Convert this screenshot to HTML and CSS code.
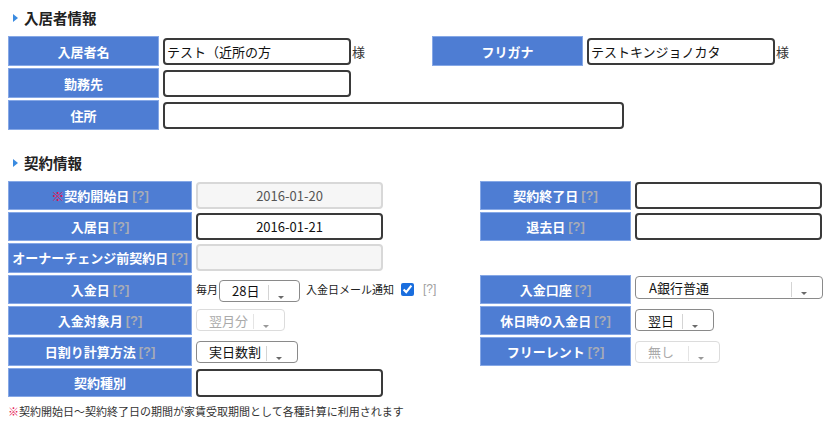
FILE: index.html
```html
<!DOCTYPE html>
<html lang="ja">
<head>
<meta charset="utf-8">
<title>入居者情報</title>
<link rel="stylesheet" href="styles.css">
</head>
<body>
<div class="page">
  <h2 class="heading"><span class="tri"></span>入居者情報</h2>
  <div class="grid grid1">
    <div class="lbl">入居者名</div>
    <div class="val"><input class="inp w188" type="text" value="テスト（近所の方"><span class="sama">様</span></div>
    <div class="lbl">フリガナ</div>
    <div class="val"><input class="inp w188" type="text" value="テストキンジョノカタ"><span class="sama">様</span></div>

    <div class="lbl">勤務先</div>
    <div class="val"><input class="inp w188" type="text" value=""></div>
    <div class="blank span2"></div>

    <div class="lbl">住所</div>
    <div class="val span3"><input class="inp w461" type="text" value=""></div>
  </div>

  <h2 class="heading heading2"><span class="tri"></span>契約情報</h2>
  <div class="grid grid2">
    <div class="lbl"><span class="req">※</span>契約開始日 <span class="q">[?]</span></div>
    <div class="val"><input class="inp w187 dis center" type="text" value="2016-01-20" readonly></div>
    <div class="lbl">契約終了日 <span class="q">[?]</span></div>
    <div class="val"><input class="inp w187" type="text" value=""></div>

    <div class="lbl">入居日 <span class="q">[?]</span></div>
    <div class="val"><input class="inp w187 center" type="text" value="2016-01-21"></div>
    <div class="lbl">退去日 <span class="q">[?]</span></div>
    <div class="val"><input class="inp w187" type="text" value=""></div>

    <div class="lbl">オーナーチェンジ前契約日 <span class="q">[?]</span></div>
    <div class="val"><input class="inp w187 dis" type="text" value="" readonly></div>
    <div class="blank span2"></div>

    <div class="lbl">入金日 <span class="q">[?]</span></div>
    <div class="val small">
      <span class="maitsuki">毎月</span>
      <div class="sel s81 lowsel"><span class="sel-text">28日</span><span class="sel-btn"><span class="arrow"></span></span></div>
      <span class="mail">入金日メール通知</span>
      <input class="chk" type="checkbox" checked>
      <span class="qv">[?]</span>
    </div>
    <div class="lbl">入金口座 <span class="q">[?]</span></div>
    <div class="val"><div class="sel s188 topsel"><span class="sel-text">A銀行普通</span><span class="sel-btn"><span class="arrow"></span></span></div></div>

    <div class="lbl">入金対象月 <span class="q">[?]</span></div>
    <div class="val"><div class="sel s89 seldis"><span class="sel-text">翌月分</span><span class="sel-btn"><span class="arrow"></span></span></div></div>
    <div class="lbl">休日時の入金日 <span class="q">[?]</span></div>
    <div class="val"><div class="sel s79"><span class="sel-text">翌日</span><span class="sel-btn"><span class="arrow"></span></span></div></div>

    <div class="lbl">日割り計算方法 <span class="q">[?]</span></div>
    <div class="val"><div class="sel s102"><span class="sel-text">実日数割</span><span class="sel-btn"><span class="arrow"></span></span></div></div>
    <div class="lbl">フリーレント <span class="q">[?]</span></div>
    <div class="val"><div class="sel s85 seldis"><span class="sel-text">無し</span><span class="sel-btn"><span class="arrow"></span></span></div></div>

    <div class="lbl">契約種別</div>
    <div class="val"><input class="inp w187 h28" type="text" value=""></div>
    <div class="blank span2"></div>
  </div>
  <p class="note"><span class="req">※</span>契約開始日～契約終了日の期間が家賃受取期間として各種計算に利用されます</p>
</div>
</body>
</html>
```
FILE: styles.css
```css
* { box-sizing: border-box; }
html, body { margin: 0; padding: 0; background: #fff; }
body {
  font-family: "Noto Sans CJK JP", "Noto Sans", sans-serif;
  color: #222;
  font-size: 13px;
}
.page { padding: 8px 8px 0 8px; }

.heading {
  display: flex;
  align-items: center;
  height: 20px;
  margin: 0 0 8px 0;
  padding-left: 5px;
  font-size: 14.5px;
  font-weight: bold;
  color: #222;
  line-height: 20px;
}
.heading2 { margin-top: 23px; }
.tri {
  display: inline-block;
  width: 0; height: 0;
  border-top: 4.5px solid transparent;
  border-bottom: 4.5px solid transparent;
  border-left: 5px solid #3a8be0;
  margin-right: 6px;
}

.grid { display: grid; gap: 2px; }
.grid1 { grid-template-columns: 151px 269px 151px 1fr; grid-auto-rows: 30px; }
.grid2 { grid-template-columns: 184px 284px 151px 1fr; grid-auto-rows: 29.2px; }
.span2 { grid-column: span 2; }
.span3 { grid-column: span 3; }

.lbl {
  background: #4e7dd3;
  border: 1px solid #86a8e6;
  color: #fff;
  font-weight: bold;
  font-size: 13px;
  display: flex;
  align-items: center;
  justify-content: center;
  white-space: nowrap;
}
.q {
  color: #a8acb6;
  margin-left: 3px;
  font-family: "Liberation Sans", Arial, sans-serif;
  font-weight: bold;
  font-size: 13px;
}
.req { color: #e5114f; }

.val {
  display: flex;
  align-items: center;
  padding-left: 2px;
}

.inp {
  height: 27px;
  border: 2px solid #3a3a3a;
  border-radius: 4px;
  font-family: "Noto Sans CJK JP", "Noto Sans", sans-serif;
  font-size: 13px;
  color: #111;
  padding: 0 2px;
  background: #fff;
  outline: none;
}
.inp.h28 { height: 28px; }
.inp.center { text-align: center; }
.inp.dis { background: #f6f6f6; border-color: #d8d8d8; color: #555; }
.w188 { width: 188px; }
.w187 { width: 187px; }
.w461 { width: 461px; }
.sama { margin-left: 1px; font-size: 13px; color: #333; }

.small { font-size: 11px; color: #222; }
.maitsuki { margin-right: 1px; }
.mail { margin-left: 6px; }
.chk {
  width: 13px; height: 13px;
  margin: 0 0 0 7px;
  accent-color: #1a6ede;
}
.qv {
  color: #a0a0a0;
  margin-left: 9px;
  font-size: 12px;
  font-family: "Liberation Sans", Arial, sans-serif;
}

.sel {
  display: inline-flex;
  align-items: stretch;
  height: 22px;
  border: 1px solid #8a8a8a;
  border-radius: 4px;
  background: #fff;
  font-size: 13px;
  color: #111;
}
.lowsel { margin-top: 3px; }
.topsel { margin-top: -4px; height: 23px; }
.sel-text {
  flex: 1;
  display: flex;
  align-items: center;
  padding-left: 12px;
  white-space: nowrap;
}
.sel-btn {
  width: 31px;
  position: relative;
}
.sel-btn::before {
  content: "";
  position: absolute;
  left: 0; bottom: 1px;
  width: 1px; height: 15px;
  background: #d4d4d4;
}
.arrow {
  position: absolute;
  left: 10px; top: 15px;
  width: 0; height: 0;
  border-left: 3px solid transparent;
  border-right: 3px solid transparent;
  border-top: 3px solid #6a6a6a;
}
.seldis { border-color: #dcdcdc; color: #aaa; }
.seldis .arrow { border-top-color: #999; }
.seldis .sel-btn::before { background: #e4e4e4; }
.s81 { width: 81px; }
.s89 { width: 89px; }
.s79 { width: 79px; }
.s102 { width: 102px; }
.s85 { width: 85px; }
.s188 { width: 188px; }
.s188 .sel-text { padding-left: 13px; }

.note {
  margin: 7px 0 0 0;
  font-size: 11px;
  color: #333;
  line-height: 14px;
}
```
